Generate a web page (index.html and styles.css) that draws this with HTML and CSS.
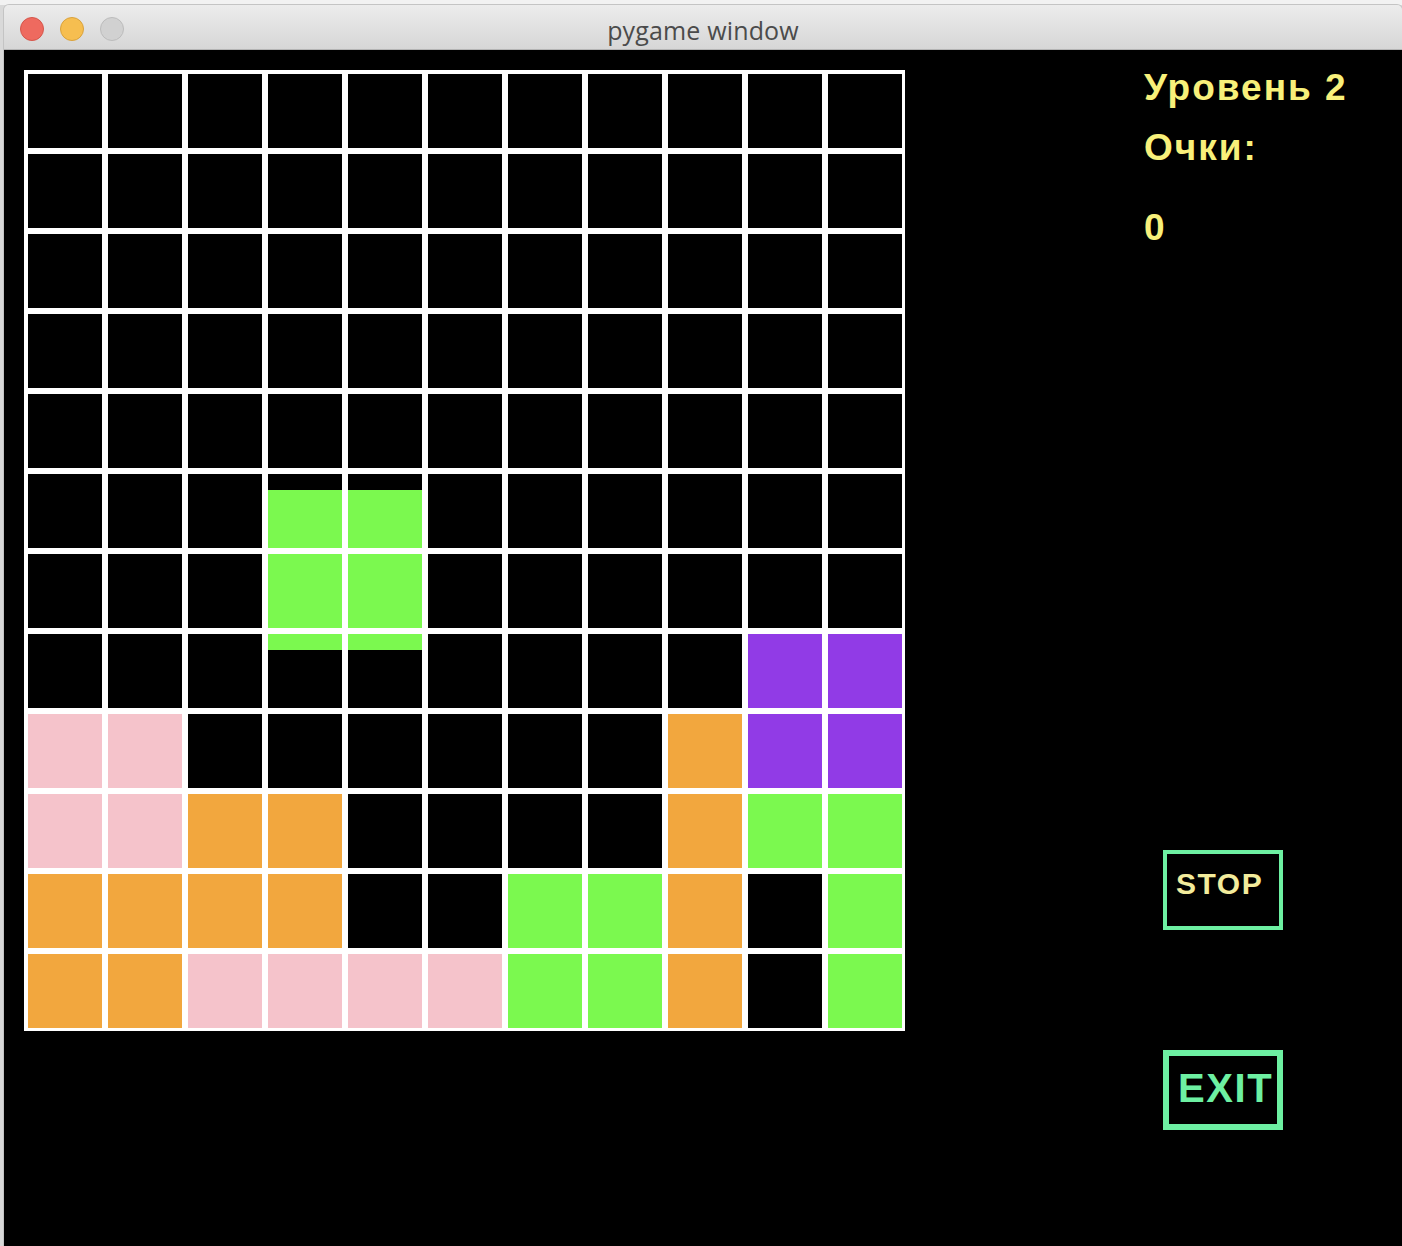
FILE: index.html
```html
<!DOCTYPE html>
<html lang="ru">
<head>
<meta charset="utf-8">
<title>pygame window</title>
<link rel="stylesheet" href="styles.css">
</head>
<body>
<div class="desktop">
  <div class="window">
    <div class="titlebar">
      <div class="lights">
        <span class="light red"></span>
        <span class="light yellow"></span>
        <span class="light gray"></span>
      </div>
      <div class="title">pygame window</div>
      <div></div>
    </div>
    <div class="screen">
      <div class="board">
        <div class="c"></div><div class="c"></div><div class="c"></div><div class="c"></div><div class="c"></div><div class="c"></div><div class="c"></div><div class="c"></div><div class="c"></div><div class="c"></div><div class="c"></div>
        <div class="c"></div><div class="c"></div><div class="c"></div><div class="c"></div><div class="c"></div><div class="c"></div><div class="c"></div><div class="c"></div><div class="c"></div><div class="c"></div><div class="c"></div>
        <div class="c"></div><div class="c"></div><div class="c"></div><div class="c"></div><div class="c"></div><div class="c"></div><div class="c"></div><div class="c"></div><div class="c"></div><div class="c"></div><div class="c"></div>
        <div class="c"></div><div class="c"></div><div class="c"></div><div class="c"></div><div class="c"></div><div class="c"></div><div class="c"></div><div class="c"></div><div class="c"></div><div class="c"></div><div class="c"></div>
        <div class="c"></div><div class="c"></div><div class="c"></div><div class="c"></div><div class="c"></div><div class="c"></div><div class="c"></div><div class="c"></div><div class="c"></div><div class="c"></div><div class="c"></div>

        <div class="c"></div><div class="c"></div><div class="c"></div><div class="c ft"></div><div class="c ft"></div><div class="c"></div><div class="c"></div><div class="c"></div><div class="c"></div><div class="c"></div><div class="c"></div>
        <div class="c"></div><div class="c"></div><div class="c"></div><div class="c g"></div><div class="c g"></div><div class="c"></div><div class="c"></div><div class="c"></div><div class="c"></div><div class="c"></div><div class="c"></div>
        <div class="c"></div><div class="c"></div><div class="c"></div><div class="c fb"></div><div class="c fb"></div><div class="c"></div><div class="c"></div><div class="c"></div><div class="c"></div><div class="c v"></div><div class="c v"></div>
        <div class="c p"></div><div class="c p"></div><div class="c"></div><div class="c"></div><div class="c"></div><div class="c"></div><div class="c"></div><div class="c"></div><div class="c o"></div><div class="c v"></div><div class="c v"></div>
        <div class="c p"></div><div class="c p"></div><div class="c o"></div><div class="c o"></div><div class="c"></div><div class="c"></div><div class="c"></div><div class="c"></div><div class="c o"></div><div class="c g"></div><div class="c g"></div>
        <div class="c o"></div><div class="c o"></div><div class="c o"></div><div class="c o"></div><div class="c"></div><div class="c"></div><div class="c g"></div><div class="c g"></div><div class="c o"></div><div class="c"></div><div class="c g"></div>
        <div class="c o"></div><div class="c o"></div><div class="c p"></div><div class="c p"></div><div class="c p"></div><div class="c p"></div><div class="c g"></div><div class="c g"></div><div class="c o"></div><div class="c"></div><div class="c g"></div>
      </div>
      <div class="side">
        <div class="info">Уровень 2</div>
        <div class="info">Очки:</div>
        <div class="info score">0</div>
        <div class="btn stop">STOP</div>
        <div class="btn exit">EXIT</div>
      </div>
    </div>
  </div>
</div>
</body>
</html>
```
FILE: styles.css
```css
html, body {
  margin: 0;
  padding: 0;
  height: 1246px;
  overflow: hidden;
}

body {
  background: #dcdcdc;
}

.desktop {
  height: 1246px;
  padding: 5px 0 0 4px;
  box-sizing: border-box;
  background: linear-gradient(#f2f2f2 0 5px, #d9d9d9 5px);
}

.window {
  width: 1398px;
  height: 1241px;
  display: flex;
  flex-direction: column;
  border-radius: 5px 5px 0 0;
  overflow: hidden;
  box-shadow: 0 0 0 1px #c4c4c4;
}

.titlebar {
  height: 44px;
  flex: none;
  display: grid;
  grid-template-columns: 1fr auto 1fr;
  align-items: center;
  background: linear-gradient(#ececec, #d6d6d6);
  border-bottom: 1px solid #b4b4b4;
}

.lights {
  display: flex;
  gap: 16px;
  padding-left: 16px;
}

.light {
  width: 22px;
  height: 22px;
  border-radius: 50%;
  border: 1px solid;
}

.red { background: #ee6a5f; border-color: #d5564b; }
.yellow { background: #f6be50; border-color: #d9a23c; }
.gray { background: #d1d1d1; border-color: #bcbcbc; }

.title {
  font-family: "Open Sans", "Liberation Sans", sans-serif;
  font-size: 25px;
  letter-spacing: 0.15px;
  color: #4b4b4b;
  line-height: 44px;
  padding-top: 3px;
}

.screen {
  flex: 1;
  background: #000;
  display: flex;
  align-items: flex-start;
  padding-left: 20px;
}

.board {
  margin-top: 20px;
  display: grid;
  grid-template-columns: repeat(11, 74px);
  grid-auto-rows: 74px;
  gap: 6px;
  padding: 4px 3px 3px 4px;
  background: #fff;
}

.c { background: #000; }
.c.g { background: #7bf94f; }
.c.p { background: #f5c3cb; }
.c.o { background: #f2a73e; }
.c.v { background: #913be6; }
.c.ft { background: linear-gradient(#000 0 16px, #7bf94f 16px); }
.c.fb { background: linear-gradient(#7bf94f 0 16px, #000 16px); }

.side {
  margin-left: 239px;
  padding-top: 8px;
  display: flex;
  flex-direction: column;
  align-items: flex-start;
}

.info {
  font-family: "Liberation Sans", Arial, sans-serif;
  font-weight: bold;
  font-size: 37px;
  letter-spacing: 2px;
  line-height: 60px;
  color: #f8f07a;
}

.score {
  margin-top: 20px;
}

.btn {
  width: 120px;
  height: 80px;
  box-sizing: border-box;
  margin-left: 19px;
  font-family: "Liberation Sans", Arial, sans-serif;
  font-weight: bold;
  border: 4px solid #6df0a2;
}

.stop {
  margin-top: 592px;
  font-size: 30px;
  line-height: 30px;
  letter-spacing: 1.5px;
  padding: 15px 0 0 9px;
  color: #f3ec9c;
}

.exit {
  margin-top: 120px;
  border-width: 6px;
  font-size: 40px;
  line-height: 40px;
  letter-spacing: 1.6px;
  padding: 12px 0 0 9px;
  color: #6df0a2;
}
```
